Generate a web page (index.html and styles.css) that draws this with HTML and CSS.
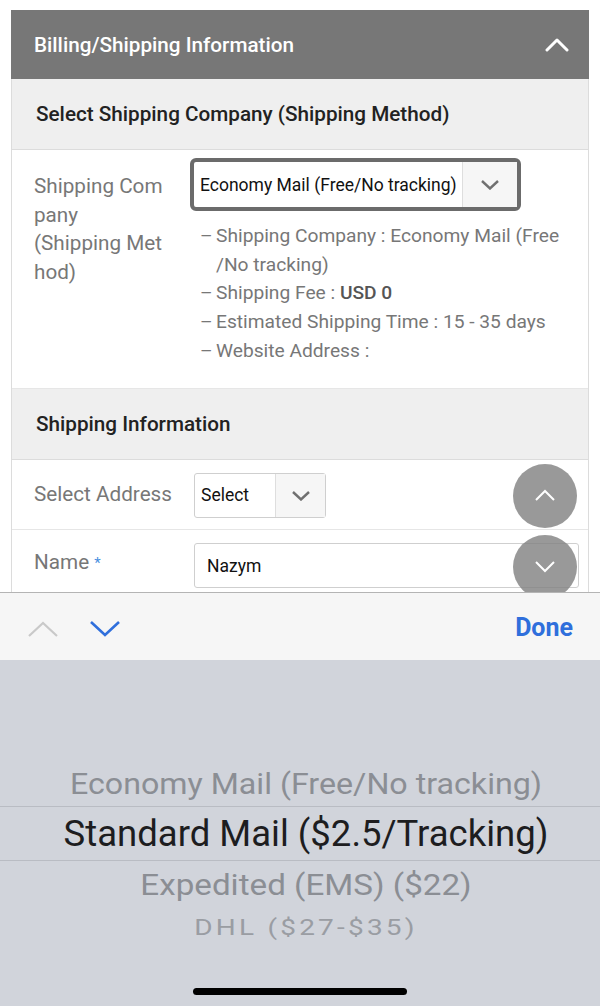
FILE: index.html
```html
<!DOCTYPE html>
<html lang="en">
<head>
<meta charset="utf-8">
<title>Billing/Shipping Information</title>
<link rel="stylesheet" href="styles.css">
</head>
<body>
<div class="viewport">
  <div class="card">
    <div class="card-header">
      <span class="card-title">Billing/Shipping Information</span>
      <svg class="hdr-chev" width="24" height="14" viewBox="0 0 24 14"><polyline points="2,12 12,2 22,12" fill="none" stroke="#fff" stroke-width="3" stroke-linecap="round" stroke-linejoin="round"/></svg>
    </div>
    <div class="section-title">Select Shipping Company (Shipping Method)</div>
    <div class="row row-ship">
      <div class="label">Shipping Com<br>pany<br>(Shipping Met<br>hod)</div>
      <div class="field">
        <div class="select select-focus">
          <span class="select-text">Economy Mail (Free/No tracking)</span>
          <span class="select-btn"><svg width="20" height="11" viewBox="0 0 20 11"><polyline points="2,2 10,9.5 18,2" fill="none" stroke="#707070" stroke-width="2.4"/></svg></span>
        </div>
        <ul class="details">
          <li><span class="dash">–</span><span>Shipping Company : Economy Mail (Free<br>/No tracking)</span></li>
          <li><span class="dash">–</span><span>Shipping Fee : <b>USD 0</b></span></li>
          <li><span class="dash">–</span><span>Estimated Shipping Time : 15 - 35 days</span></li>
          <li><span class="dash">–</span><span>Website Address :</span></li>
        </ul>
      </div>
    </div>
    <div class="section-title">Shipping Information</div>
    <div class="row row-addr">
      <div class="label">Select Address</div>
      <div class="select select-small">
        <span class="select-text">Select</span>
        <span class="select-btn"><svg width="20" height="11" viewBox="0 0 20 11"><polyline points="2,2 10,9.5 18,2" fill="none" stroke="#707070" stroke-width="2.4"/></svg></span>
      </div>
    </div>
    <div class="row row-name">
      <div class="label">Name <span class="req">*</span></div>
      <div class="input">Nazym</div>
    </div>
  </div>
  <button class="fab fab-up" aria-label="Scroll up"><svg width="22" height="12" viewBox="0 0 22 12"><polyline points="2,11 11,2 20,11" fill="none" stroke="#fff" stroke-width="2"/></svg></button>
  <button class="fab fab-down" aria-label="Scroll down"><svg width="22" height="12" viewBox="0 0 22 12"><polyline points="2,1 11,10 20,1" fill="none" stroke="#fff" stroke-width="2"/></svg></button>
</div>
<div class="kb-bar">
  <div class="kb-arrows">
    <svg width="32" height="18" viewBox="0 0 32 18"><polyline points="2,16 16,3 30,16" fill="none" stroke="#c9c9c9" stroke-width="2.2"/></svg>
    <svg width="32" height="18" viewBox="0 0 32 18"><polyline points="2,2 16,15 30,2" fill="none" stroke="#2f6fdc" stroke-width="2.6"/></svg>
  </div>
  <span class="done">Done</span>
</div>
<div class="picker">
  <div class="pick pick-1">Economy Mail (Free/No tracking)</div>
  <div class="pick-selected">Standard Mail ($2.5/Tracking)</div>
  <div class="pick pick-3">Expedited (EMS) ($22)</div>
  <div class="pick pick-4">DHL ($27-$35)</div>
  <div class="home-bar"></div>
</div>
</body>
</html>
```

FILE: styles.css
```css
* { box-sizing: border-box; }
html, body { margin: 0; padding: 0; }
body {
  width: 600px;
  height: 1006px;
  overflow: hidden;
  background: #fff;
  font-family: Roboto, "Liberation Sans", sans-serif;
}
.viewport {
  position: relative;
  height: 592px;
  overflow: hidden;
  padding-top: 10px;
}
.card {
  margin: 0 11px 0 11px;
  border-left: 1px solid #dcdcdc;
  border-right: 1px solid #dcdcdc;
}
.card-header {
  height: 69px;
  background: #777;
  margin: 0 -1px;
  display: flex;
  align-items: center;
  justify-content: space-between;
  padding: 0 20px 0 23px;
}
.card-title {
  color: #fff;
  font-size: 20.7px;
  font-weight: 500;
}
.hdr-chev { display: block; margin-top: 1px; }
.section-title {
  height: 71px;
  background: #efefef;
  border-bottom: 1px solid #dcdcdc;
  display: flex;
  align-items: center;
  padding-left: 24px;
  font-size: 20.7px;
  font-weight: 500;
  color: #222;
}
.row {
  display: flex;
  align-items: flex-start;
  border-bottom: 1px solid #e6e6e6;
}
.label {
  width: 178px;
  padding-left: 22px;
  font-size: 20.7px;
  color: #777;
  line-height: 28.5px;
  flex: none;
  white-space: nowrap;
}
.row-ship {
  padding-top: 8px;
  height: 239px;
}
.row-ship .label { padding-top: 14px; }
.field { display: flex; flex-direction: column; }
.select {
  display: flex;
  align-items: stretch;
  background: #fff;
  border: 1px solid #cfcfcf;
  border-radius: 3px;
}
.select-focus {
  width: 331px;
  height: 53px;
  border: 4px solid #6b6b6b;
  border-radius: 6px;
}
.select-text {
  flex: 1;
  display: flex;
  align-items: center;
  padding-left: 6px;
  font-size: 17.5px;
  color: #111;
  white-space: nowrap;
}
.select-btn {
  width: 55px;
  display: flex;
  align-items: center;
  justify-content: center;
  background: #f6f6f6;
  border-left: 1px solid #dedede;
}
.details {
  list-style: none;
  margin: 11px 0 0 10px;
  padding: 0;
  font-size: 19.2px;
  line-height: 28.7px;
  color: #777;
  white-space: nowrap;
}
.details li { display: flex; }
.details .dash { width: 16px; flex: none; }
.details b { font-weight: 500; color: #555; }
.row-addr {
  height: 70px;
  align-items: center;
}
.row-addr .label { width: 182px; }
.select-small {
  width: 132px;
  height: 45px;
  margin-top: 1px;
}
.select-small .select-btn { width: 50px; }
.row-name {
  height: 80px;
  padding-top: 13px;
}
.row-name .label { width: 182px; padding-top: 5px; }
.req { color: #4a8fe0; font-size: 15px; vertical-align: 1px; }
.input {
  width: 385px;
  height: 45px;
  border: 1px solid #cfcfcf;
  border-radius: 3px;
  display: flex;
  align-items: center;
  padding-left: 12px;
  font-size: 17.5px;
  color: #111;
}
.fab {
  position: absolute;
  right: 23px;
  width: 64px;
  height: 64px;
  border-radius: 50%;
  border: none;
  padding: 0;
  background: rgba(128, 128, 128, 0.8);
  display: flex;
  align-items: center;
  justify-content: center;
}
.fab-up { top: 464px; }
.fab-up svg { margin-top: -2px; }
.fab-down { top: 535px; }
.kb-bar {
  height: 68px;
  background: #f6f6f6;
  border-top: 1px solid #b4b4b4;
  display: flex;
  align-items: center;
  justify-content: space-between;
  padding: 0 27px 0 27px;
}
.kb-arrows { display: flex; gap: 30px; margin-top: 4px; }
.kb-arrows svg { display: block; }
.done {
  color: #2f6fdc;
  font-size: 25px;
  font-weight: 700;
  margin-top: 2px;
}
.picker {
  height: 346px;
  background: #d1d4db;
  display: flex;
  flex-direction: column;
  align-items: center;
  padding-top: 103px;
}
.pick, .pick-selected {
  width: 100%;
  text-align: center;
  white-space: nowrap;
  padding-left: 12px;
}
.pick-1 {
  height: 43px;
  font-size: 32.2px;
  line-height: 43px;
  color: #8b8e94;
  transform: scaleY(0.92);
}
.pick-selected {
  height: 55px;
  border-top: 1px solid #b9bcc3;
  border-bottom: 1px solid #b9bcc3;
  font-size: 36.5px;
  line-height: 53px;
  color: #1d1d1f;
}
.pick-3 {
  height: 47px;
  font-size: 33.2px;
  line-height: 47px;
  color: #8b8e94;
  transform: scaleY(0.88);
}
.pick-4 {
  height: 40px;
  font-size: 28px;
  line-height: 40px;
  color: #9a9da3;
  letter-spacing: 3.2px;
  transform: scaleY(0.76);
}
.home-bar {
  width: 214px;
  height: 7px;
  border-radius: 4px;
  background: #000;
  margin-top: 40px;
}
```
